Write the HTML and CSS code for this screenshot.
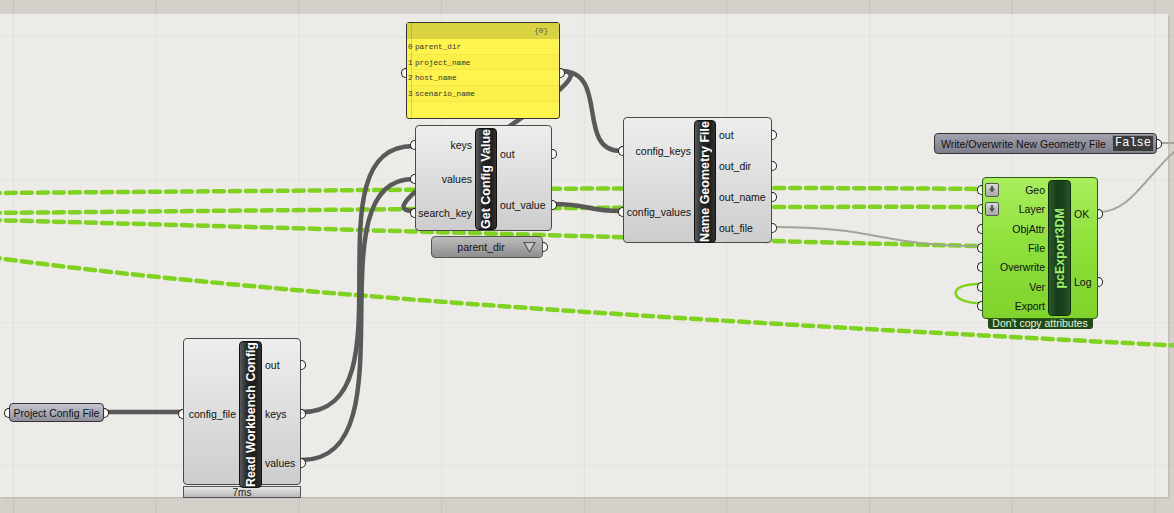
FILE: index.html
```html
<!DOCTYPE html>
<html lang="en">
<head>
  <meta charset="UTF-8" />
  <title>Grasshopper Canvas</title>
  <link rel="stylesheet" href="styles.css">
</head>
<body>
  <div class="canvas">
    <div class="sheet"></div>

    <svg class="wires" width="1174" height="513" viewBox="0 0 1174 513">
      <!-- list wires coming from off screen -->
      <g class="dash">
        <path d="M-10,193 C 300,191 700,186 980,189" />
        <path d="M-10,213 C 300,210 700,206 980,207" />
        <path d="M-10,220 C 300,228 700,240 980,246" />
        <path d="M-10,257 C 300,300 800,326 1184,346" />
      </g>
      <g class="faint">
        <path d="M773,227 C 880,227 880,246 980,246" />
        <path d="M1099,212 C 1135,212 1150,165 1190,140" />
        <path d="M1159,143 L1180,143" />
      </g>
      <g class="wire">
        <path d="M105,412 L181,412" />
        <path d="M302,412 C 415,412 305,146 413,146" />
        <path d="M302,460 C 415,460 310,179 413,179" />
        <path d="M561,71 C 625,71 350,211 413,211" />
        <path d="M561,71 C 610,71 575,151 621,151" />
        <path d="M553,204 C 590,204 585,211 621,211" />
      </g>
      <path class="green-loop" d="M980,284 C 945,284 950,303 980,303" />
    </svg>

    <div class="panel">
      <div class="panel-head">{0}</div>
      <div class="panel-row"><b>0</b>parent_dir</div>
      <div class="panel-row"><b>1</b>project_name</div>
      <div class="panel-row"><b>2</b>host_name</div>
      <div class="panel-row"><b>3</b>scenario_name</div>
      <i class="grip in panel-in"></i>
      <i class="grip out panel-out"></i>
    </div>

    <div class="comp gcv">
      <div class="ins">
        <span class="port">keys<i class="grip in"></i></span>
        <span class="port">values<i class="grip in"></i></span>
        <span class="port">search_key<i class="grip in"></i></span>
      </div>
      <div class="bar"><span>Get Config Value</span></div>
      <div class="outs">
        <span class="port">out<i class="grip out"></i></span>
        <span class="port">out_value<i class="grip out"></i></span>
      </div>
    </div>

    <div class="dropdown">parent_dir<span class="tri"></span><i class="grip out"></i></div>

    <div class="comp ngf">
      <div class="ins">
        <span class="port">config_keys<i class="grip in"></i></span>
        <span class="port">config_values<i class="grip in"></i></span>
      </div>
      <div class="bar"><span>Name Geometry File</span></div>
      <div class="outs">
        <span class="port">out<i class="grip out"></i></span>
        <span class="port">out_dir<i class="grip out"></i></span>
        <span class="port">out_name<i class="grip out"></i></span>
        <span class="port">out_file<i class="grip out"></i></span>
      </div>
    </div>

    <div class="toggle">
      <span class="toggle-label">Write/Overwrite New Geometry File</span>
      <span class="toggle-value">False</span>
      <i class="grip out"></i>
    </div>

    <div class="node pce-node">
      <div class="comp pce">
        <div class="ins">
          <span class="port"><em class="flat"></em>Geo<i class="grip in"></i></span>
          <span class="port"><em class="flat"></em>Layer<i class="grip in"></i></span>
          <span class="port">ObjAttr<i class="grip in"></i></span>
          <span class="port">File<i class="grip in"></i></span>
          <span class="port">Overwrite<i class="grip in"></i></span>
          <span class="port">Ver<i class="grip in"></i></span>
          <span class="port">Export<i class="grip in"></i></span>
        </div>
        <div class="bar"><span>pcExport3DM</span></div>
        <div class="outs">
          <span class="port">OK<i class="grip out"></i></span>
          <span class="port">Log<i class="grip out"></i></span>
        </div>
      </div>
      <div class="caption">Don't copy attributes</div>
    </div>

    <div class="node rwc-node">
      <div class="comp rwc">
        <div class="ins">
          <span class="port">config_file<i class="grip in"></i></span>
        </div>
        <div class="bar"><span>Read Workbench Config</span></div>
        <div class="outs">
          <span class="port">out<i class="grip out"></i></span>
          <span class="port">keys<i class="grip out"></i></span>
          <span class="port">values<i class="grip out"></i></span>
        </div>
      </div>
      <div class="timing">7ms</div>
    </div>

    <div class="param">Project Config File<i class="grip in"></i><i class="grip out"></i></div>
  </div>
</body>
</html>
```

FILE: styles.css
```css
body {
  margin: 0;
  font-family: "Liberation Sans", Arial, sans-serif;
  background: #d5d1ca;
}

.canvas {
  position: relative;
  width: 1174px;
  height: 513px;
  overflow: hidden;
  background-color: #d5d1ca;
  background-image:
    linear-gradient(to right, rgba(0, 0, 0, 0.07) 1px, transparent 1px),
    linear-gradient(to bottom, rgba(0, 0, 0, 0.05) 1px, transparent 1px);
  background-size: 142.7px 143px;
  background-position: 13px 36px;
}

.sheet {
  position: absolute;
  left: 0;
  top: 14px;
  width: 1168px;
  height: 483px;
  background-color: #ecebe7;
  background-image:
    linear-gradient(to right, rgba(0, 0, 0, 0.045) 1px, transparent 1px),
    linear-gradient(to bottom, rgba(0, 0, 0, 0.035) 1px, transparent 1px);
  background-size: 142.7px 143px;
  background-position: 13px 22px;
  box-shadow: 1px 1px 0 #c2beb7, 2px 2px 0 #cbc7c0;
}

.wires {
  position: absolute;
  left: 0;
  top: 0;
}

.wires path {
  fill: none;
  stroke-linecap: round;
}

.dash path {
  stroke: #7fd320;
  stroke-width: 4.5;
  stroke-dasharray: 10 6;
}

.faint path {
  stroke: #a3a398;
  stroke-width: 2;
}

.wire path {
  stroke: #595959;
  stroke-width: 4.5;
}

.green-loop {
  stroke: #7fd320;
  stroke-width: 2.5;
}

/* grips */
.grip {
  position: absolute;
  top: 50%;
  width: 4px;
  height: 8px;
  margin-top: -5px;
  background: #fff;
  border: 1.5px solid #1e1e1e;
}

.grip.in {
  left: -6px;
  border-right: none;
  border-radius: 5px 0 0 5px;
}

.grip.out {
  right: -6px;
  border-left: none;
  border-radius: 0 5px 5px 0;
}

/* components */
.node {
  position: absolute;
  display: flex;
  flex-direction: column;
  align-items: center;
}

.comp {
  position: absolute;
  display: grid;
  box-sizing: border-box;
  padding: 2px 0;
  border: 1px solid #4a4a4a;
  border-radius: 4px;
  background: linear-gradient(#eeeeee, #cdcdcd);
  font-size: 10.5px;
  color: #111;
}

.node .comp {
  position: relative;
}

.ins,
.outs {
  display: flex;
  flex-direction: column;
}

.port {
  position: relative;
  flex: 1;
  display: flex;
  align-items: center;
  white-space: nowrap;
}

.ins .port {
  justify-content: flex-end;
  padding-right: 3px;
}

.outs .port {
  padding-left: 3px;
}

.bar {
  display: flex;
  align-items: center;
  justify-content: center;
  border: 1px solid #111;
  border-radius: 4px;
  background: linear-gradient(90deg, #5a5a5a, #262626 35%, #1c1c1c 70%, #333);
}

.bar span {
  writing-mode: vertical-rl;
  transform: rotate(180deg);
  color: #fff;
  font-weight: bold;
  font-size: 12.5px;
  white-space: nowrap;
}

.gcv {
  left: 415px;
  top: 125px;
  width: 137px;
  height: 106px;
  grid-template-columns: 59px 22px 54px;
}

.ngf {
  left: 623px;
  top: 117px;
  width: 149px;
  height: 126px;
  grid-template-columns: 70px 22px 55px;
}

.pce-node {
  left: 982px;
  top: 177px;
}

.pce {
  width: 116px;
  height: 142px;
  grid-template-columns: 65px 23px 26px;
  border-color: #2f5a16;
  background: linear-gradient(#a9ee5c, #8ddf3a 50%, #7fd32a);
}

.pce .bar {
  border-color: #0f2b0f;
  background: linear-gradient(90deg, #2f5b2b, #173d18 40%, #1a451a 70%, #2b552a);
}

.pce .bar span {
  color: #9ff06a;
}

.flat {
  position: absolute;
  left: 2px;
  top: 50%;
  width: 12px;
  height: 12px;
  margin-top: -7px;
  border: 1px solid #555;
  border-radius: 2px;
  background: linear-gradient(#d9d9d9, #a9a9a9);
}

.flat::after {
  content: "";
  position: absolute;
  left: 3px;
  top: 2px;
  width: 6px;
  height: 7px;
  background: #555;
  clip-path: polygon(30% 0, 70% 0, 70% 45%, 100% 45%, 50% 100%, 0 45%, 30% 45%);
}

.caption {
  margin-top: -1px;
  width: 105px;
  height: 11px;
  line-height: 11px;
  text-align: center;
  font-size: 10.5px;
  color: #e8f5dc;
  background: #1f4a17;
  border-radius: 0 0 3px 3px;
}

.rwc-node {
  left: 183px;
  top: 338px;
}

.rwc {
  width: 118px;
  height: 147px;
  grid-template-columns: 55px 23px 38px;
}

.timing {
  box-sizing: border-box;
  margin-top: 1px;
  width: 118px;
  height: 12px;
  line-height: 12px;
  text-align: center;
  font-size: 10px;
  color: #222;
  border: 1px solid #555;
  background: linear-gradient(#e6e6e6, #b9b9b9);
}

/* yellow panel */
.panel {
  position: absolute;
  left: 406px;
  top: 22px;
  width: 154px;
  height: 97px;
  box-sizing: border-box;
  border: 1px solid #333;
  border-radius: 3px;
  background: #fff44e;
  font-family: "Liberation Mono", monospace;
  font-size: 7.7px;
  color: #333;
}

.panel::before {
  content: "";
  position: absolute;
  left: 4px;
  top: 0;
  bottom: 0;
  width: 1px;
  background: rgba(120, 110, 0, 0.25);
}

.panel-head {
  height: 16px;
  line-height: 17px;
  text-align: right;
  padding-right: 11px;
  background: #d9d241;
  color: #555;
}

.panel-row {
  height: 15.7px;
  line-height: 16px;
  border-bottom: 1px solid #f2e64a;
  box-sizing: border-box;
}

.panel-row:nth-child(odd) {
  background: #fbef4a;
}

.panel-row b {
  display: inline-block;
  width: 7px;
  padding-left: 1px;
  font-weight: normal;
}

.panel-in {
  top: 50px;
}

.panel-out {
  top: 50px;
}

/* dropdown */
.dropdown {
  position: absolute;
  left: 431px;
  top: 236px;
  width: 112px;
  height: 22px;
  box-sizing: border-box;
  display: flex;
  align-items: center;
  justify-content: center;
  padding-right: 12px;
  border: 1px solid #555;
  border-radius: 4px;
  background: linear-gradient(#bcbcbc, #8e8e8e);
  font-size: 10.5px;
  color: #111;
}

.tri {
  position: absolute;
  right: 6px;
  top: 5px;
  width: 13px;
  height: 11px;
  background: #555;
  clip-path: polygon(0 0, 100% 0, 50% 100%);
}

.tri::after {
  content: "";
  position: absolute;
  left: 2px;
  top: 1px;
  width: 9px;
  height: 8px;
  background: #c8c8c8;
  clip-path: polygon(0 0, 100% 0, 50% 100%);
}

/* boolean toggle */
.toggle {
  position: absolute;
  left: 934px;
  top: 133px;
  width: 223px;
  height: 21px;
  box-sizing: border-box;
  display: flex;
  align-items: center;
  justify-content: space-between;
  padding: 0 2px 0 6px;
  border: 1px solid #333;
  border-radius: 4px;
  background: linear-gradient(#a3a3b0, #7d7d8b);
  font-size: 10.5px;
  color: #111;
}

.toggle-value {
  width: 40px;
  height: 15px;
  line-height: 15px;
  text-align: center;
  font-family: "Liberation Mono", monospace;
  font-size: 12px;
  color: #fff;
  background: #3b3b3b;
  border: 1px solid #8a8a8a;
}

/* param */
.param {
  position: absolute;
  left: 9px;
  top: 403px;
  width: 95px;
  height: 19px;
  box-sizing: border-box;
  display: flex;
  align-items: center;
  justify-content: center;
  border: 1px solid #333;
  border-radius: 4px;
  background: linear-gradient(#c6c6d0, #8f8f9c);
  font-size: 10.5px;
  color: #111;
}
```
